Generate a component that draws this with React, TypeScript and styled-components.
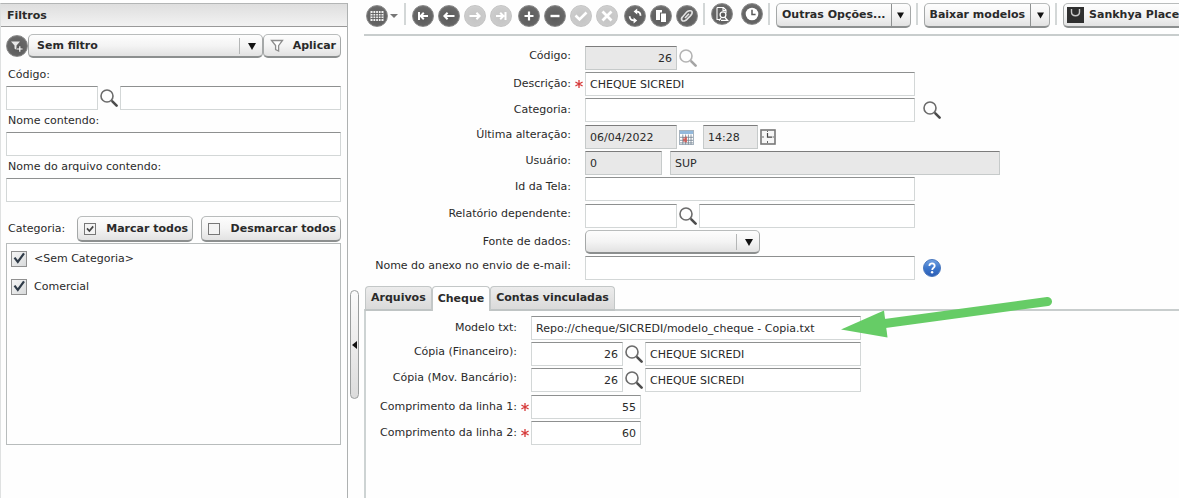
import React, { useState } from "react";
import styled, { createGlobalStyle, css } from "styled-components";

const GlobalStyle = createGlobalStyle`
  *, *::before, *::after { box-sizing: border-box; }
  body {
    margin: 0;
    overflow: hidden;
    background: #fefefe;
    color: #2a2a2a;
    font: 11px/14px "DejaVu Sans", Verdana, sans-serif;
  }
  button, input, select { font: inherit; color: inherit; margin: 0; }
  svg { display: block; flex: none; }
`;

const Page = styled.div`
  display: grid;
  grid-template-columns: 348px 16px minmax(0, 1fr);
  min-height: 100vh;
`;

/* ---------- shared controls ---------- */

const TextInput = styled.input<{ $w?: number; $right?: boolean }>`
  ${(p) => (p.$w ? `width: ${p.$w}px; flex: none;` : "flex: 1; min-width: 0;")}
  height: 24px;
  padding: 0 4px;
  border: 1px solid #d3d7d7;
  border-top-color: #8e9090;
  border-radius: 0;
  background: #fff;
  text-align: ${(p) => (p.$right ? "right" : "left")};
  outline: none;
  &:read-only {
    background: #e8e8e8;
    border-color: #c6caca;
    border-top-color: #7c7c7c;
  }
`;

const raised = css`
  border: 1px solid #a5a8a8;
  border-top-color: #b9bcbc;
  border-bottom: 2px solid #8c8f8f;
  border-radius: 5px;
  background: linear-gradient(#fdfdfd, #f4f4f4 50%, #e2e2e2);
`;

const PushButton = styled.button<{ $h: number; $w?: number }>`
  ${raised}
  display: flex;
  align-items: center;
  justify-content: space-between;
  flex: none;
  height: ${(p) => p.$h}px;
  ${(p) => p.$w && `width: ${p.$w}px;`}
  padding: 0 4px 0 6px;
  font-weight: bold;
  white-space: nowrap;
`;

const PlaceButton = styled(PushButton)`
  justify-content: flex-start;
  gap: 5px;
  padding: 0 8px 0 3px;
`;

const SelectBox = styled.span<{ $w: number }>`
  display: grid;
  flex: none;
  width: ${(p) => p.$w}px;
  & > * { grid-area: 1 / 1; }
`;

const Select = styled.select`
  ${raised}
  appearance: none;
  width: 100%;
  height: 24px;
  padding: 0 28px 0 8px;
  font-weight: bold;
  outline: none;
`;

const SelectArrow = styled.span`
  display: flex;
  align-items: center;
  justify-content: center;
  justify-self: end;
  align-self: center;
  width: 24px;
  height: 16px;
  border-left: 1px solid #b4b6b6;
  pointer-events: none;
`;

const IconButton = styled.button<{ $w?: number; $faded?: boolean }>`
  display: flex;
  align-items: center;
  justify-content: center;
  flex: none;
  width: ${(p) => p.$w ?? 22}px;
  height: 24px;
  padding: 0;
  border: 0;
  background: none;
  opacity: ${(p) => (p.$faded ? 0.5 : 1)};
`;

const RoundButton = styled.button`
  display: flex;
  align-items: center;
  justify-content: center;
  flex: none;
  width: 22px;
  height: 22px;
  padding: 0;
  border: 1px solid #8a8a8a;
  border-radius: 50%;
  background: radial-gradient(circle at 50% 60%, #5a5a5a, #686868 65%, #808080);
  color: #fff;
  &:disabled {
    border-color: #c4c4c4;
    background: radial-gradient(circle at 50% 60%, #c4c4c4, #cccccc 65%, #dcdcdc);
  }
`;

/* ---------- filter panel ---------- */

const FilterPanel = styled.aside`
  margin-top: 3px;
  border: 1px solid #dfe1e1;
  border-top-color: #b3b5b5;
  border-right-color: #aeb1b1;
  border-bottom: 0;
`;

const PanelTitle = styled.h2`
  margin: 0;
  height: 23px;
  padding: 0 6px;
  border-bottom: 1px solid #999;
  background: linear-gradient(#dedede, #f2f2f2);
  font-size: 11px;
  line-height: 23px;
`;

const PanelBody = styled.form`
  display: flex;
  flex-direction: column;
  padding: 7px 6px 0 5px;
`;

const Line = styled.div`
  display: flex;
  align-items: center;
`;

const FilterLabel = styled.label`
  padding: 0 2px;
  line-height: 22px;
`;

const FirstFilterLabel = styled(FilterLabel)`
  margin-top: 6px;
`;

const CategoryHead = styled.div`
  display: flex;
  align-items: center;
  gap: 8px;
  margin: 14px 0 1px;
`;

const CategoryTitle = styled.span`
  flex: 1;
  padding-left: 2px;
`;

const CategoryList = styled.ul`
  height: 202px;
  margin: 0;
  padding: 1px 4px;
  border: 1px solid #b8bcbc;
  list-style: none;
`;

const CategoryItem = styled.label`
  display: flex;
  align-items: center;
  gap: 7px;
  height: 28px;
`;

const Tick = styled.span`
  display: grid;
  width: 16px;
  height: 16px;
  & > * { grid-area: 1 / 1; }
  & > svg { pointer-events: none; visibility: hidden; }
  & > input:checked + svg { visibility: visible; }
`;

const TickInput = styled.input`
  appearance: none;
  width: 16px;
  height: 16px;
  border: 1px solid #909090;
  background: linear-gradient(135deg, #f6f6f6, #d8dadb);
`;

/* ---------- splitter ---------- */

const Gutter = styled.div`
  padding: 290px 0 0 2px;
`;

const Collapse = styled.button`
  display: flex;
  align-items: center;
  justify-content: center;
  width: 9px;
  height: 109px;
  padding: 0;
  border: 1px solid #9b9e9e;
  border-radius: 5px;
  background: linear-gradient(#fbfbfb, #dcdcdc);
`;

/* ---------- main area ---------- */

const Main = styled.main`
  display: flex;
  flex-direction: column;
  min-width: 0;
`;

const Toolbar = styled.div`
  display: flex;
  align-items: flex-start;
  height: 36px;
  padding: 3px 0 0 2px;
  border-bottom: 2px solid #c8cdcd;
  overflow: hidden;
`;

const Divider = styled.span`
  flex: none;
  width: 2px;
  height: 22px;
  margin: 0 6px 0 5px;
  background: #d3d7d7;
`;

const ToolGroup = styled.div<{ $gap: number; $drop?: boolean }>`
  display: flex;
  align-items: center;
  flex: none;
  gap: ${(p) => p.$gap}px;
  padding-top: ${(p) => (p.$drop ? 2 : 0)}px;
`;

const GridMenu = styled(ToolGroup)`
  padding-right: 1px;
`;

const SplitButton = styled.div`
  ${raised}
  display: flex;
  flex: none;
  height: 25px;
  overflow: hidden;
`;

const SplitLabel = styled.button`
  padding: 0 5px;
  border: 0;
  background: none;
  font-weight: bold;
  white-space: nowrap;
`;

const SplitArrow = styled.button`
  display: flex;
  align-items: center;
  justify-content: center;
  width: 19px;
  padding: 0;
  border: 0;
  border-left: 1px solid #8e9191;
  background: none;
`;

const RecordForm = styled.form`
  display: flex;
  flex-direction: column;
  gap: 3px;
  padding-top: 10px;
`;

const FieldGroup = styled.div`
  display: flex;
  flex-direction: column;
  gap: 2px;
`;

const FieldRow = styled.div`
  display: flex;
  height: 24px;
`;

const FieldLabel = styled.label<{ $w: number; $middle?: boolean }>`
  flex: none;
  width: ${(p) => p.$w}px;
  line-height: ${(p) => (p.$middle ? 24 : 20)}px;
  text-align: right;
  white-space: nowrap;
`;

const Mark = styled.span`
  display: flex;
  align-items: center;
  justify-content: flex-end;
  flex: none;
  width: 14px;
  padding-right: 2px;
`;

const Controls = styled.div`
  position: relative;
  display: flex;
  align-items: center;
`;

const Gap = styled.span`
  width: 8px;
`;

const Pointer = styled.svg`
  position: absolute;
  left: 310px;
  top: -20px;
  pointer-events: none;
`;

const Tabs = styled.div`
  display: flex;
  align-items: flex-end;
  margin-top: 6px;
  padding-left: 1px;
  box-shadow: inset 0 -2px #c8cdcd;
`;

const Tab = styled.button<{ $on: boolean }>`
  height: 25px;
  padding: 0 5px;
  border: 1px solid #c3c7c7;
  border-bottom: ${(p) => (p.$on ? "0" : "2px solid #bfc4c4")};
  border-radius: 4px 4px 0 0;
  background: ${(p) => (p.$on ? "#fefefe" : "linear-gradient(#ececec, #dadada)")};
  font-weight: bold;
  white-space: nowrap;
`;

const TabPanel = styled.section`
  display: flex;
  flex-direction: column;
  flex: 1;
  gap: 3px;
  padding-top: 5px;
  border-left: 2px solid #cdd3d3;
`;

/* ---------- drawings ---------- */

const Down = ({ w = 8 }: { w?: number }) => (
  <svg width={w} height="7" viewBox="0 0 8 7"><path d="M0 0h8L4 7z" fill="#111" /></svg>
);

const Lupa = () => (
  <svg width="18" height="18" viewBox="0 0 18 18" fill="none">
    <circle cx="7" cy="7" r="6" stroke="#6b6b6b" strokeWidth="1.6" />
    <path d="M11.2 11.2l1.6 1.4" stroke="#6b6b6b" strokeWidth="1.6" />
    <path d="M12.6 12.6l4 4" stroke="#4c4c4c" strokeWidth="2.6" strokeLinecap="round" />
  </svg>
);

const Asterisk = () => (
  <svg width="8" height="8" viewBox="0 0 8 8" stroke="#d63a3a" strokeWidth="1.3">
    <path d="M4 0v8M.4 2l7.2 4M7.6 2L.4 6" />
  </svg>
);

const glyphs: Record<string, React.ReactNode> = {
  grid: (
    <>
      <rect x="3.5" y="5" width="13" height="10" fill="#f2f2f2" stroke="none" />
      <path d="M3.5 7.5h13M3.5 10h13M3.5 12.5h13M6 5v10M8.7 5v10M11.4 5v10M14 5v10" stroke="#5c5c5c" strokeWidth=".9" />
    </>
  ),
  first: <path d="M6 6v8M15 10H8.500M10.800 6.800L7.600 10l3.200 3.200" />,
  prev: <path d="M15.5 10H5.5M8.6 6.8L5.4 10l3.2 3.2" />,
  next: <path d="M4.5 10h10M11.4 6.8l3.2 3.2-3.2 3.2" />,
  last: <path d="M14.5 6v8M5 10h7M9.200 6.800l3.200 3.200-3.200 3.200" />,
  plus: <path d="M10 5.5v9M5.5 10h9" strokeWidth="2.2" />,
  minus: <path d="M5.5 10h9" strokeWidth="2.4" />,
  check: <path d="M4.5 9.5l4 4 7-7" strokeWidth="2.6" />,
  close: <path d="M5.5 5.5l9 9M14.5 5.5l-9 9" strokeWidth="2.8" />,
  refresh: (
    <>
      <path d="M12.200 2.600v6L8.600 5.600zM8.600 17.400v-6l3.600 3z" fill="#fff" stroke="none" />
      <path d="M11.500 5.600c2.600 0 4 1.200 4 4.200M9.300 14.400c-3 0-4.600-1.200-4.600-4.200" strokeWidth="1.800" strokeDasharray="7 1" />
    </>
  ),
  copy: (
    <>
      <path d="M5 4h6v2.5H9V14H5z" fill="#fff" stroke="none" />
      <path d="M10 7.5h5V16h-5z" fill="#fff" stroke="none" />
    </>
  ),
  clip: (
    <path d="M5.2 14.6c-1-1-.8-2.5.3-3.7l4-4.6c1.5-1.5 4.5-2.2 5.4-.9.8 1.4-.3 3.2-1.5 4.5l-3 3c-1.1 1.2-3.9 3-5.2 1.7zM8 12l4-4.3" strokeWidth="1.6" stroke="#e2e2e2" />
  ),
  preview: (
    <>
      <path d="M5 3.5h6.5L14 6v3M5 3.5v12h3M11 3.8V6.5h3" strokeWidth="1.1" />
      <circle cx="11" cy="10.8" r="2.9" strokeWidth="1.3" />
      <path d="M9 14.2l-2 2.3M13 13.5l2.5 2.8H9" strokeWidth="1.3" />
    </>
  ),
  clock: (
    <>
      <circle cx="10" cy="10" r="6.3" fill="#fff" stroke="none" />
      <path d="M10 5.8V10.5h3.6" stroke="#5a5a5a" strokeWidth="1.5" />
    </>
  ),
  filter: (
    <>
      <path d="M4 5.5h9L9.5 9.5V14l-2-1.5v-3z" fill="#e8e8e8" stroke="none" />
      <path d="M12.8 10v6M9.8 13h6" stroke="#5a5a5a" strokeWidth="3" />
      <path d="M12.8 10.2v5.6M10 13h5.6" strokeWidth="1.2" />
    </>
  ),
};

const Glyph = ({ name }: { name: string }) => (
  <svg width="20" height="20" viewBox="0 0 20 20" fill="none" stroke="currentColor" strokeWidth="2">
    {glyphs[name]}
  </svg>
);

const Funnel = () => (
  <svg width="14" height="13" viewBox="0 0 14 13" fill="#fff" stroke="#8c8c8c" strokeWidth="1.3">
    <path d="M1.500 1.500h11L8.600 6.600V12L5.600 10.600v-4z" />
  </svg>
);

const SmallBox = ({ checked }: { checked?: boolean }) => (
  <svg width="12" height="12" viewBox="0 0 12 12" fill="none">
    <rect x=".5" y=".5" width="11" height="11" fill="#f3f3f3" stroke="#777" />
    {checked && <path d="M3 5.4l2.4 2.6L9.2 3.4" stroke="#444" strokeWidth="1.7" />}
  </svg>
);

const TickMark = () => (
  <svg width="16" height="16" viewBox="0 0 16 16" fill="none">
    <path d="M3.5 6.6L6.8 11 13 2.4" stroke="#2f3b48" strokeWidth="2.2" />
  </svg>
);

const Calendar = () => (
  <svg width="15" height="15" viewBox="0 0 15 15">
    <rect x=".5" y=".5" width="14" height="14" fill="#fff" stroke="#a6b2bd" />
    <rect x="1" y="1" width="13" height="3" fill="#93b9dc" />
    <rect x="4" y="7" width="4" height="5" fill="#ef9a94" />
    <path d="M1 7.3h13M1 10.3h13M3.8 4.5v10M6.6 4.5v10M9.4 4.5v10M12 4.5v10M1 12.9h13" stroke="#71808f" strokeWidth=".8" />
    <path d="M7 6.5v6M4 9.8h3.5" stroke="#d9544c" strokeWidth="1.2" />
  </svg>
);

const TimeIcon = () => (
  <svg width="16" height="16" viewBox="0 0 16 16" fill="none">
    <rect x="1" y="1" width="14" height="14" fill="#f6f6f6" stroke="#777" strokeWidth="1.6" />
    <path d="M7.5 4v4.2H12" stroke="#444" strokeWidth="1.2" />
    <path d="M7.5 1.8v1.2M7.5 12v2M2 8h2M12.5 8H14" stroke="#666" />
  </svg>
);

const Help = () => (
  <svg width="18" height="18" viewBox="0 0 18 18">
    <defs>
      <linearGradient id="helpFill" x1="0" y1="0" x2="0" y2="1">
        <stop offset="0" stopColor="#74a3e2" />
        <stop offset=".5" stopColor="#3d77cc" />
        <stop offset="1" stopColor="#2a5cb4" />
      </linearGradient>
    </defs>
    <circle cx="9" cy="9" r="8.5" fill="url(#helpFill)" stroke="#4a78bd" />
    <path d="M6.4 6.9c0-3.4 5.3-3.2 5.3 0 0 1.8-2.5 1.9-2.5 4" fill="none" stroke="#fff" strokeWidth="1.8" />
    <circle cx="9.1" cy="13.2" r="1.2" fill="#fff" />
  </svg>
);

const Bag = () => (
  <svg width="17" height="16" viewBox="0 0 17 16" fill="none">
    <rect width="17" height="16" fill="#2f2f2f" />
    <path d="M4.500 2v3c0 5 8 5 8 0V2" stroke="#c9c9c9" strokeWidth="1.4" />
  </svg>
);

/* ---------- composed parts ---------- */

const Tool = ({ name, label, off }: { name: string; label: string; off?: boolean }) => (
  <RoundButton type="button" aria-label={label} disabled={off}><Glyph name={name} /></RoundButton>
);

const Search = ({ w, faded }: { w?: number; faded?: boolean }) => (
  <IconButton type="button" aria-label="Pesquisar" $w={w} $faded={faded}><Lupa /></IconButton>
);

const Split = ({ text }: { text: string }) => (
  <SplitButton>
    <SplitLabel type="button">{text}</SplitLabel>
    <SplitArrow type="button" aria-label={`Mais: ${text}`}><Down w={7} /></SplitArrow>
  </SplitButton>
);

type FieldProps = {
  id: string;
  label: string;
  w?: number;
  middle?: boolean;
  required?: boolean;
  children: React.ReactNode;
};

const Field = ({ id, label, w = 207, middle, required, children }: FieldProps) => (
  <FieldRow>
    <FieldLabel htmlFor={id} $w={w} $middle={middle}>{label}</FieldLabel>
    <Mark>{required && <Asterisk />}</Mark>
    <Controls>{children}</Controls>
  </FieldRow>
);

const TAB_LABEL = 151;
const tabs = ["Arquivos", "Cheque", "Contas vinculadas"];

export default function App() {
  const [tab, setTab] = useState("Cheque");
  return (
    <>
      <GlobalStyle />
      <Page>
        <FilterPanel>
          <PanelTitle>Filtros</PanelTitle>
          <PanelBody>
            <Line>
              <Tool name="filter" label="Novo filtro" />
              <SelectBox $w={235}>
                <Select aria-label="Filtro"><option>Sem filtro</option></Select>
                <SelectArrow><Down /></SelectArrow>
              </SelectBox>
              <PushButton type="button" $h={24} $w={78}><Funnel />Aplicar</PushButton>
            </Line>
            <FirstFilterLabel htmlFor="f-codigo">Código:</FirstFilterLabel>
            <Line>
              <TextInput id="f-codigo" $w={92} />
              <Search />
              <TextInput aria-label="Descrição do código" />
            </Line>
            <FilterLabel htmlFor="f-nome">Nome contendo:</FilterLabel>
            <Line><TextInput id="f-nome" /></Line>
            <FilterLabel htmlFor="f-arquivo">Nome do arquivo contendo:</FilterLabel>
            <Line><TextInput id="f-arquivo" /></Line>
            <CategoryHead>
              <CategoryTitle>Categoria:</CategoryTitle>
              <PushButton type="button" $h={26} $w={116}><SmallBox checked />Marcar todos</PushButton>
              <PushButton type="button" $h={26} $w={140}><SmallBox />Desmarcar todos</PushButton>
            </CategoryHead>
            <CategoryList>
              {["<Sem Categoria>", "Comercial"].map((c) => (
                <li key={c}>
                  <CategoryItem>
                    <Tick><TickInput type="checkbox" defaultChecked /><TickMark /></Tick>
                    {c}
                  </CategoryItem>
                </li>
              ))}
            </CategoryList>
          </PanelBody>
        </FilterPanel>

        <Gutter>
          <Collapse type="button" aria-label="Recolher filtros">
            <svg width="5" height="8" viewBox="0 0 5 8"><path d="M5 0v8L0 4z" fill="#111" /></svg>
          </Collapse>
        </Gutter>

        <Main>
          <Toolbar>
            <GridMenu $gap={2} $drop>
              <Tool name="grid" label="Modo grade" />
              <svg width="8" height="4" viewBox="0 0 8 4"><path d="M0 0h8L4 4z" fill="#777" /></svg>
            </GridMenu>
            <Divider />
            <ToolGroup $gap={6} $drop>
              <ToolGroup $gap={4}>
                <Tool name="first" label="Primeiro" />
                <Tool name="prev" label="Anterior" />
                <Tool name="next" label="Próximo" off />
                <Tool name="last" label="Último" off />
              </ToolGroup>
              <ToolGroup $gap={4}>
                <Tool name="plus" label="Adicionar" />
                <Tool name="minus" label="Remover" />
                <Tool name="check" label="Salvar" off />
                <Tool name="close" label="Cancelar" off />
              </ToolGroup>
              <ToolGroup $gap={4}>
                <Tool name="refresh" label="Atualizar" />
                <Tool name="copy" label="Duplicar" />
                <Tool name="clip" label="Anexos" />
              </ToolGroup>
            </ToolGroup>
            <Divider />
            <ToolGroup $gap={8}>
              <Tool name="preview" label="Visualizar" />
              <Tool name="clock" label="Histórico" />
            </ToolGroup>
            <Divider />
            <Split text="Outras Opções..." />
            <Divider />
            <Split text="Baixar modelos" />
            <Divider />
            <PlaceButton type="button" $h={25}><Bag />Sankhya Place</PlaceButton>
          </Toolbar>

          <RecordForm>
            <FieldGroup>
              <Field id="codigo" label="Código:">
                <TextInput id="codigo" $w={92} $right readOnly defaultValue="26" />
                <Search faded />
              </Field>
              <Field id="descricao" label="Descrição:" middle required>
                <TextInput id="descricao" $w={330} defaultValue="CHEQUE SICREDI" />
              </Field>
              <Field id="categoria" label="Categoria:" middle>
                <TextInput id="categoria" $w={330} />
                <Search w={34} />
              </Field>
            </FieldGroup>
            <FieldGroup>
              <Field id="data" label="Última alteração:">
                <TextInput id="data" $w={92} readOnly defaultValue="06/04/2022" />
                <IconButton type="button" aria-label="Calendário" $w={18}><Calendar /></IconButton>
                <Gap />
                <TextInput aria-label="Hora da alteração" $w={55} readOnly defaultValue="14:28" />
                <IconButton type="button" aria-label="Hora" $w={20}><TimeIcon /></IconButton>
              </Field>
              <Field id="usuario" label="Usuário:">
                <TextInput id="usuario" $w={77} readOnly defaultValue="0" />
                <Gap />
                <TextInput aria-label="Nome do usuário" $w={330} readOnly defaultValue="SUP" />
              </Field>
              <Field id="tela" label="Id da Tela:">
                <TextInput id="tela" $w={330} />
              </Field>
            </FieldGroup>
            <FieldGroup>
              <Field id="relatorio" label="Relatório dependente:">
                <TextInput id="relatorio" $w={92} />
                <Search />
                <TextInput aria-label="Nome do relatório" $w={216} />
              </Field>
              <Field id="fonte" label="Fonte de dados:" middle>
                <SelectBox $w={175}>
                  <Select id="fonte"><option /></Select>
                  <SelectArrow><Down /></SelectArrow>
                </SelectBox>
              </Field>
              <Field id="anexo" label="Nome do anexo no envio de e-mail:">
                <TextInput id="anexo" $w={330} />
                <IconButton type="button" aria-label="Ajuda" $w={34}><Help /></IconButton>
              </Field>
            </FieldGroup>
          </RecordForm>

          <Tabs role="tablist">
            {tabs.map((t) => (
              <Tab key={t} type="button" role="tab" aria-selected={t === tab} $on={t === tab} onClick={() => setTab(t)}>
                {t}
              </Tab>
            ))}
          </Tabs>
          <TabPanel role="tabpanel" aria-label={tab}>
            <FieldGroup>
              <Field id="modelo" label="Modelo txt:" w={TAB_LABEL} middle>
                <TextInput id="modelo" $w={330} defaultValue="Repo://cheque/SICREDI/modelo_cheque - Copia.txt" />
                <Pointer width="214" height="44" viewBox="0 0 214 44">
                  <path d="M44 27.500L206.500 5.500" stroke="#66cc66" strokeWidth="9" strokeLinecap="round" />
                  <path d="M0 33.500L43 14.500l3.500 27z" fill="#66cc66" />
                </Pointer>
              </Field>
              <Field id="financeiro" label="Cópia (Financeiro):" w={TAB_LABEL}>
                <TextInput id="financeiro" $w={92} $right defaultValue="26" />
                <Search />
                <TextInput aria-label="Nome da cópia financeiro" $w={216} defaultValue="CHEQUE SICREDI" />
              </Field>
              <Field id="bancario" label="Cópia (Mov. Bancário):" w={TAB_LABEL}>
                <TextInput id="bancario" $w={92} $right defaultValue="26" />
                <Search />
                <TextInput aria-label="Nome da cópia bancário" $w={216} defaultValue="CHEQUE SICREDI" />
              </Field>
            </FieldGroup>
            <FieldGroup>
              <Field id="linha1" label="Comprimento da linha 1:" w={TAB_LABEL} middle required>
                <TextInput id="linha1" $w={110} $right defaultValue="55" />
              </Field>
              <Field id="linha2" label="Comprimento da linha 2:" w={TAB_LABEL} middle required>
                <TextInput id="linha2" $w={110} $right defaultValue="60" />
              </Field>
            </FieldGroup>
          </TabPanel>
        </Main>
      </Page>
    </>
  );
}
